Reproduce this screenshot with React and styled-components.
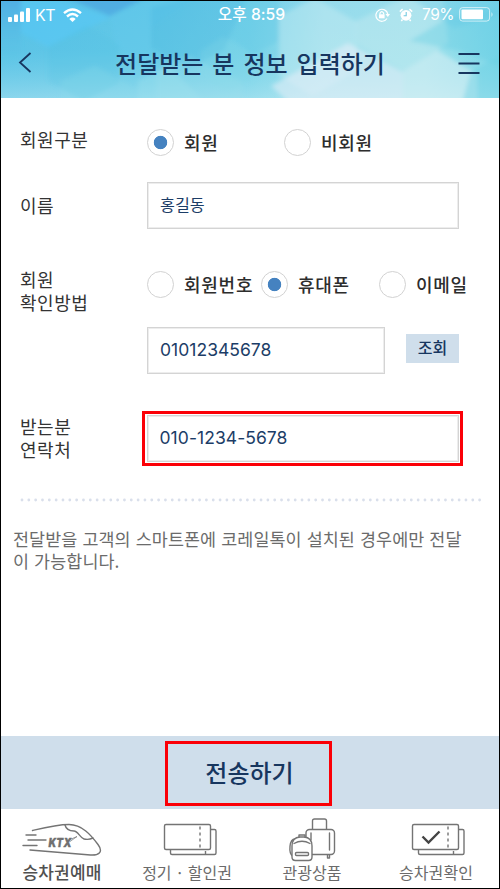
import React from "react";
import styled, { createGlobalStyle } from "styled-components";

const Global = createGlobalStyle`
  * { box-sizing: border-box; }
  body { margin: 0; background: #fff; font-family: Inter, "Noto Sans CJK KR", sans-serif; }
  button, input { font-family: inherit; border-radius: 0; margin: 0; }
`;

const ko = `"Noto Sans CJK KR", sans-serif`;

const Screen = styled.div`
  width: 500px;
  height: 889px;
  border: 1px solid #000;
  display: flex;
  flex-direction: column;
  background: #fff;
  overflow: hidden;
  font-family: ${ko};
`;

const Header = styled.header`
  position: relative;
  flex: none;
  height: 97px;
  display: flex;
  flex-direction: column;
  isolation: isolate;
`;

const Backdrop = styled.svg`
  position: absolute;
  inset: 0;
  z-index: -1;
  width: 100%;
  height: 100%;
`;

const StatusBar = styled.div`
  display: grid;
  grid-template-columns: 1fr auto 1fr;
  height: 26px;
  align-items: center;
  padding: 0 5px 0 7px;
  color: #fff;
  font: 400 15.5px/26px Inter, ${ko};
`;

const StatusGroup = styled.div`
  display: flex;
  align-items: center;
  justify-content: ${(p) => (p.$end ? "flex-end" : "flex-start")};
`;

const Carrier = styled.span`
  margin: 0 8px 0 5px;
  font-size: 16px;
  line-height: 26px;
  letter-spacing: -0.4px;
`;

const Clock = styled.span`
  font-size: 15.7px;
  font-weight: 500;
  margin-left: 1px;
  padding-top: 1px;
  white-space: nowrap;
`;

const Percent = styled.span`
  margin: 0 5px 0 9px;
  font-size: 15.5px;
  letter-spacing: -0.5px;
`;

const TitleBar = styled.div`
  flex: 1;
  display: grid;
  grid-template-columns: 60px 1fr 60px;
  align-items: center;
`;

const IconButton = styled.button`
  display: flex;
  align-items: center;
  height: 40px;
  width: 60px;
  border: 0;
  padding: 0 0 0 ${(p) => p.$left}px;
  background: none;
`;

const Title = styled.h1`
  margin: 0;
  text-align: center;
  white-space: nowrap;
  font: 500 24px/36px ${ko};
  word-spacing: 3.6px;
  color: #17365f;
`;

const Form = styled.form`
  flex: 1;
  display: flex;
  flex-direction: column;
  padding: 31px 0 0 19px;
`;

const Row = styled.div`
  display: grid;
  grid-template-columns: 127px 1fr;
  align-items: start;
  margin-bottom: ${(p) => p.$gap}px;
`;

const Label = styled.div`
  font: 400 18px/23px ${ko};
  letter-spacing: 0.55px;
  color: #333;
  margin-top: ${(p) => p.$shift || 0}px;
  white-space: pre-line;
`;

const Options = styled.div`
  display: grid;
  grid-template-columns: ${(p) => p.$columns};
`;

const Option = styled.label`
  display: flex;
  align-items: center;
  height: 27px;
  gap: 10px;
  white-space: nowrap;
  font: 500 18px/27px ${ko};
  letter-spacing: 0.75px;
  color: #2d2d2d;
`;

const Radio = styled.span`
  flex: none;
  width: 27px;
  height: 27px;
  border: 1px solid #d2d2d2;
  border-radius: 50%;
  background: ${(p) =>
    p.$on ? "radial-gradient(circle, #4582c0 6.3px, #fff 7.1px)" : "#fff"};
`;

const OptionText = styled.span`
  padding-bottom: ${(p) => p.$lift || 0}px;
`;

const FieldLine = styled.div`
  display: flex;
  align-items: flex-start;
  gap: 21px;
  margin-top: ${(p) => p.$top || 0}px;
`;

const Field = styled.input`
  display: block;
  width: ${(p) => p.$width}px;
  height: 47px;
  border: 1px solid #d4d4d4;
  box-shadow: inset 0 0 0 1px #ededed;
  padding: 0 12px ${(p) => p.$lift || 2}px;
  outline: 0;
  background: #fff;
  color: #1c3d67;
  font-family: Inter, ${ko};
  font-size: ${(p) => p.$size}px;
  letter-spacing: ${(p) => p.$track || 0}px;
`;

const Highlight = styled.div`
  width: ${(p) => p.$width}px;
  height: ${(p) => p.$height}px;
  margin: ${(p) => p.$margin || 0};
  border: 3px solid #fb0007;
  display: flex;
  align-items: center;
  justify-content: center;
`;

const LookupButton = styled.button`
  width: 53px;
  height: 29px;
  margin-top: 7px;
  border: 0;
  padding: 0 0 3px;
  background: #cfdeeb;
  color: #17365f;
  font: 500 16px/26px ${ko};
`;

const Divider = styled.svg`
  display: block;
  width: 462px;
  height: 4px;
`;

const Notice = styled.p`
  margin: 26px 0 0 -7px;
  width: 470px;
  font: 400 17.4px/22px ${ko};
  letter-spacing: 0.1px;
  word-spacing: 1px;
  color: #6b6b6b;
  white-space: pre-line;
`;

const ActionBar = styled.div`
  flex: none;
  height: 73px;
  background: #cfdeeb;
  padding: 5px 0 0 164px;
`;

const SendButton = styled.button`
  width: 100%;
  height: 100%;
  border: 0;
  padding: 0 0 3px 2px;
  background: none;
  color: #17365f;
  font: 500 24px/36px ${ko};
`;

const Nav = styled.nav`
  flex: none;
  height: 79px;
  display: grid;
  grid-template-columns: 122px 128px 122px 126px;
`;

const NavItem = styled.a`
  display: flex;
  flex-direction: column;
  align-items: center;
  padding-top: 9px;
  white-space: nowrap;
  font: ${(p) => (p.$active ? 500 : 400)} ${(p) => (p.$active ? 17 : 16)}px/24px ${ko};
  letter-spacing: ${(p) => p.$track || 0}px;
  color: ${(p) => (p.$active ? "#505050" : "#6b6b6b")};
`;

const NavText = styled.span`
  margin-top: -2px;
`;

const NavIcon = styled.svg`
  flex: none;
  width: 80px;
  height: 44px;
  margin-left: ${(p) => p.$nudge || 0}px;
  fill: none;
  stroke: #747474;
  stroke-width: 1.4;
  stroke-linecap: round;
  stroke-linejoin: round;
`;

const Logo = styled.text`
  font: italic 900 12px Inter, sans-serif;
  fill: #707070;
  stroke: #707070;
  stroke-width: 0.3px;
`;

function HeaderBackdrop() {
  return (
    <Backdrop viewBox="0 0 498 97" preserveAspectRatio="none">
      <defs>
        <linearGradient id="sky" x1="0" y1="0" x2="1" y2="0">
          <stop offset="0" stopColor="#55bfe6" />
          <stop offset=".3" stopColor="#5fc6e6" />
          <stop offset=".5" stopColor="#74d0e8" />
          <stop offset=".65" stopColor="#a0dfec" />
          <stop offset=".85" stopColor="#a4e2ec" />
          <stop offset="1" stopColor="#7dd6e8" />
        </linearGradient>
        <linearGradient id="fade" x1="0" y1="0" x2="0" y2="1">
          <stop offset="0" stopColor="#5cc4ec" stopOpacity=".15" />
          <stop offset=".5" stopColor="#7fdcea" stopOpacity=".15" />
          <stop offset="1" stopColor="#c0ecf3" stopOpacity=".5" />
        </linearGradient>
        <linearGradient id="edge" x1="0" y1="0" x2="0" y2="1">
          <stop offset="0" stopColor="#4ea6e4" stopOpacity=".75" />
          <stop offset="1" stopColor="#5fcbe4" stopOpacity=".2" />
        </linearGradient>
        <filter id="soft"><feGaussianBlur stdDeviation="2.2" /></filter>
      </defs>
      <rect width="498" height="97" fill="url(#sky)" />
      <rect width="498" height="97" fill="url(#fade)" />
      <g filter="url(#soft)">
        <path d="M-4-4h24v60L-4 66z" fill="url(#edge)" />
        <path d="M66-3h78l-35 18z" fill="#4a9fe0" opacity=".6" />
        <path d="M20 0h40l50 16-63 30-27-14z" fill="#58c8f8" opacity=".55" />
        <path d="M47 46l38-22 33 19v39l-35 18-36-20z" fill="#42bcdc" opacity=".18" />
        <path d="M109 15l45-18h40l-44 29v47l-35-28z" fill="#62c9ef" opacity=".35" />
        <path d="M150 6l38-9h58l-23 52-35 18-38-20z" fill="#48b8e0" opacity=".35" />
        <path d="M200 50l22-14 30 18v24l-26 12-26-14z" fill="#80d8e9" opacity=".3" />
        <path d="M94 65l43 24v12H60V80z" fill="#8bdcec" opacity=".3" />
        <path d="M137 80l30-16 40 40h-70z" fill="#a0e1ee" opacity=".35" />
        <path d="M188 55l53 26v24h-86V72z" fill="#a0e0ec" opacity=".25" />
        <path d="M246-3h32v43l-26 14-22-18z" fill="#62c8e6" opacity=".35" />
        <path d="M278 15l36-18 42 24v48l-44 26-34-20z" fill="#c9ecf2" opacity=".42" />
        <path d="M355 20l47-23h40l5 45-45 28-46-26z" fill="#d8f0f4" opacity=".32" />
        <path d="M408 40l40-24 53-8v58l-42-16z" fill="#5ecae2" opacity=".35" />
        <path d="M410-3h91v16l-48 14z" fill="#5ac6e4" opacity=".3" />
        <path d="M347 42l55 29v34h-110l-22-20z" fill="#e6eff7" opacity=".55" />
        <path d="M402 70l34-21 40 24v32h-74z" fill="#e0f1f6" opacity=".5" />
        <path d="M470 70l31-16v51h-41z" fill="#6acfe2" opacity=".42" />
      </g>
    </Backdrop>
  );
}

const TicketIcon = ({ checked, nudge }) => (
  <NavIcon viewBox="0 0 80 44" $nudge={nudge}>
    <path d="M66.500 11.500H70.500q1.500 0 1.500 1.500V35q0 1.500-1.500 1.500H28q-1.500 0-1.500-1.500v-3" />
    <rect x="20.500" y="6.500" width="46" height="25" rx="1.500" fill="#fff" />
    <path d="M56 8.500v21M61.500 33v3" strokeDasharray="3 3" strokeLinecap="butt" />
    {checked && (
      <path
        d="M30.500 18.500l6 6 11-11"
        stroke="#444"
        strokeWidth="2.400"
        strokeLinecap="butt"
        strokeLinejoin="miter"
      />
    )}
  </NavIcon>
);

const TrainIcon = () => (
  <NavIcon viewBox="0 0 80 44">
    <path d="M10.500 12.500C23 9.500 35 6.500 47 6.500c13 0 22 10.500 29 20 6 8 0 11-7.500 10.500L8 32" />
    <path d="M43 7c1 4 5 6 9 6s6 7 10 8 7 0 9-1M4 17h10M6 22h18M1 27.500h14" />
    <Logo x="26.500" y="28.500" textLength="23" lengthAdjust="spacingAndGlyphs">KTX</Logo>
    <path d="M47 22l8-3.500-7 5" strokeWidth=".7" />
  </NavIcon>
);

const LuggageIcon = () => (
  <NavIcon viewBox="0 0 80 44" $nudge={9}>
    <path d="M35.500 11V3q0-2 2-2h10q2 0 2 2v8" />
    <rect x="29" y="11.500" width="28.500" height="25" rx="3.500" />
    <path d="M34 15v7M52.500 15v17M50.500 37v3h2v-3" />
    <path d="M15.500 38c-4-3-3.500-17 2.500-17" />
    <path d="M15 39V28q0-8.500 8-9h4q8 .5 8 9v11q0 3.500-3.500 3.500h-13q-3.500 0-3.500-3.500z" fill="#fff" />
    <path d="M22 19v-2h6v2M17 25.500q8-4.500 16 0" />
    <rect x="18.500" y="34.500" width="13" height="3" rx="1" />
  </NavIcon>
);

export default function App() {
  return (
    <>
      <Global />
      <Screen>
        <Header>
          <HeaderBackdrop />
          <StatusBar>
            <StatusGroup>
              <svg width="22" height="14" viewBox="0 0 22 14" fill="#fff">
                <rect y="9" width="4" height="5" rx="1" />
                <rect x="6" y="6.500" width="4" height="7.500" rx="1" />
                <rect x="12" y="3.500" width="4" height="10.500" rx="1" />
                <rect x="18" width="4" height="14" rx="1" />
              </svg>
              <Carrier>KT</Carrier>
              <svg width="19" height="14" viewBox="0 0 19 14" fill="none" stroke="#fff" strokeWidth="2.400">
                <path d="M1 5.200Q9.500-2.200 18 5.200M4 8.500q5.500-5 11 0" />
                <path d="M6.300 10.900q3.200-2.600 6.400 0L9.500 14z" fill="#fff" stroke="none" />
              </svg>
            </StatusGroup>
            <Clock>오후 8:59</Clock>
            <StatusGroup $end>
              <svg width="15" height="14" viewBox="0 0 15 14" fill="none" stroke="#fff" strokeWidth="1.200">
                <path d="M12 10.500A6 6 0 1 1 12.800 6" />
                <path d="M10.500 6h4.500l-2.200 3z" fill="#fff" stroke="none" />
                <rect x="4" y="6.300" width="5.600" height="4" fill="#fff" stroke="none" />
                <path d="M5 6.500V5q1.800-2.600 3.600 0v1.500" />
              </svg>
              <svg width="23" height="14" viewBox="-9 0 23 14">
                <circle cx="7" cy="7.300" r="5.400" fill="#fff" />
                <path d="M.8 3.600l2.800-2.500M10.400 1.100l2.800 2.500M3.500 11.500l-1.200 1.500M10.500 11.500l1.200 1.500" stroke="#fff" strokeWidth="1.500" />
                <path d="M7.200 4v3.700H4.600" fill="none" stroke="#73c9df" strokeWidth="1.100" />
              </svg>
              <Percent>79%</Percent>
              <svg width="35" height="15" viewBox="0 0 35 15">
                <rect x=".6" y=".6" width="30" height="13.500" rx="3" fill="none" stroke="#fff" strokeOpacity=".65" />
                <rect x="2.500" y="2.500" width="21.500" height="9.700" rx="1" fill="#fff" />
                <path d="M32.500 5q2 2.500 0 5z" fill="#fff" fillOpacity=".75" />
              </svg>
            </StatusGroup>
          </StatusBar>
          <TitleBar>
            <IconButton type="button" $left={17} aria-label="뒤로">
              <svg width="14" height="21" viewBox="0 0 14 21" fill="none" stroke="#17365f" strokeWidth="1.800">
                <path d="M12.500 1L2 10.500 12.500 20" />
              </svg>
            </IconButton>
            <Title>전달받는 분 정보 입력하기</Title>
            <IconButton type="button" $left={19} aria-label="메뉴">
              <svg width="22" height="22" viewBox="0 0 22 22" stroke="#17365f" strokeWidth="2">
                <path d="M.5 2h21M.5 11.500h21M.5 21h21" />
              </svg>
            </IconButton>
          </TitleBar>
        </Header>

        <Form>
          <Row $gap={26}>
            <Label $shift={-1}>회원구분</Label>
            <Options $columns="137px 1fr">
              <Option><Radio $on /><OptionText>회원</OptionText></Option>
              <Option><Radio /><OptionText>비회원</OptionText></Option>
            </Options>
          </Row>
          <Row $gap={42}>
            <Label $shift={12}>이름</Label>
            <Field $width={312} $size={16.2} $lift={4} defaultValue="홍길동" />
          </Row>
          <Row $gap={37}>
            <Label $shift={-3}>{"회원\n확인방법"}</Label>
            <div>
              <Options $columns="114px 118px 1fr">
                <Option><Radio /><OptionText>회원번호</OptionText></Option>
                <Option><Radio $on /><OptionText>휴대폰</OptionText></Option>
                <Option><Radio /><OptionText>이메일</OptionText></Option>
              </Options>
              <FieldLine $top={29}>
                <Field $width={238} $size={17.5} $track={0.03} defaultValue="01012345678" />
                <LookupButton type="button">조회</LookupButton>
              </FieldLine>
            </div>
          </Row>
          <Row $gap={32}>
            <Label $shift={4}>{"받는분\n연락처"}</Label>
            <Highlight $width={321} $height={55} $margin="0 0 0 -5px">
              <Field $width={312} $size={17.5} $track={0.06} defaultValue="010-1234-5678" />
            </Highlight>
          </Row>
          <Divider>
            <line x1="2" y1="2" x2="460" y2="2" stroke="#d9dfeb" strokeWidth="2.800" strokeLinecap="round" strokeDasharray="0 6.830" />
          </Divider>
          <Notice>{"전달받을 고객의 스마트폰에 코레일톡이 설치된 경우에만 전달\n이 가능합니다."}</Notice>
        </Form>

        <ActionBar>
          <Highlight $width={167} $height={65}>
            <SendButton type="button">전송하기</SendButton>
          </Highlight>
        </ActionBar>
        <Nav>
          <NavItem $active $track={0.2}><TrainIcon /><NavText>승차권예매</NavText></NavItem>
          <NavItem><TicketIcon nudge={-6} /><NavText>정기 · 할인권</NavText></NavItem>
          <NavItem><LuggageIcon /><NavText>관광상품</NavText></NavItem>
          <NavItem $track={0.1}><TicketIcon checked nudge={-9} /><NavText>승차권확인</NavText></NavItem>
        </Nav>
      </Screen>
    </>
  );
}
